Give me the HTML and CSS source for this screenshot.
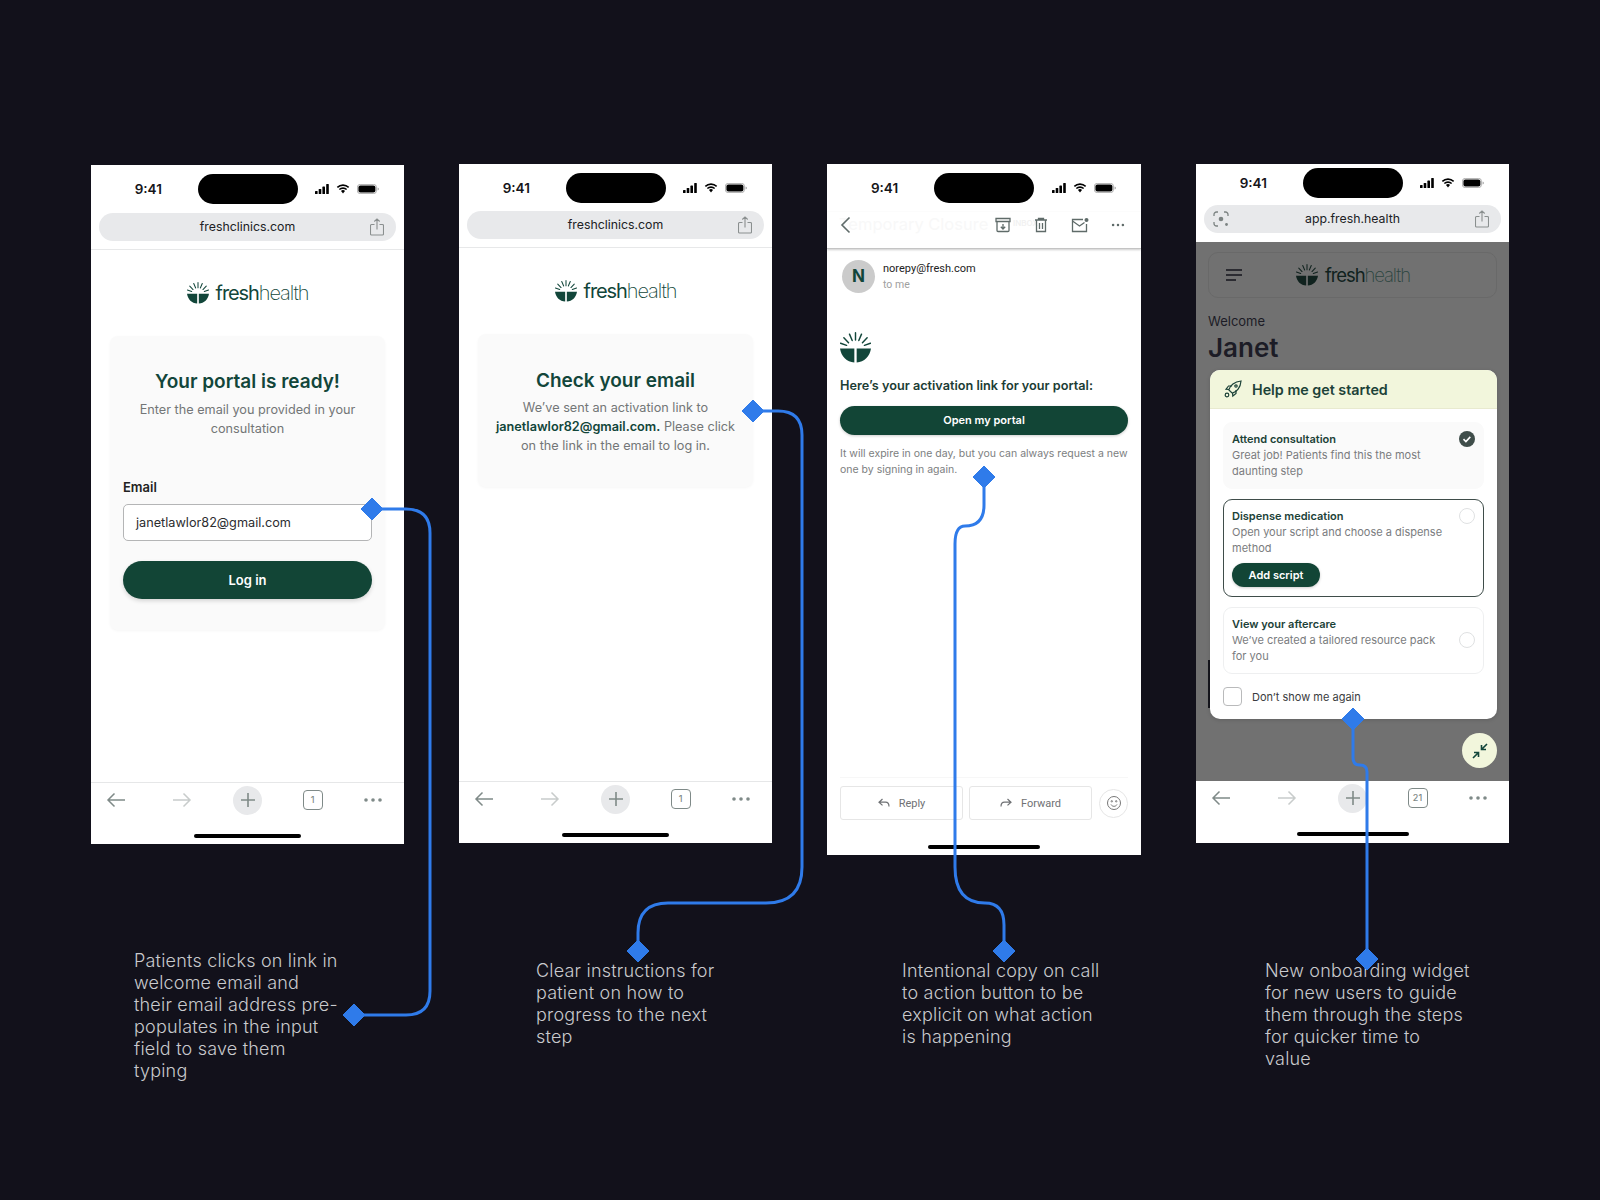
FILE: index.html
```html
<!DOCTYPE html>
<html lang="en">
  <head>
    <meta charset="UTF-8" />
    <title>Fresh Health patient portal flow</title>
    <link rel="stylesheet" href="styles.css">
  </head>
  <body>
    <svg class="defs" width="0" height="0">
      <symbol id="i-mark" viewBox="0 0 32 32">
        <g stroke="currentColor" stroke-width="1.5" stroke-linecap="round" fill="none">
          <path d="M16 .8v7.4M9.800 2.200l2.800 6.600M22.200 2.200l-2.800 6.600M4 6l4.800 5M28 6l-4.800 5M.6 11.600l6.200 2.200M31.400 11.600l-6.200 2.200" />
        </g>
        <path fill="currentColor" d="M0 17h14.800v14.400C7 31 1.200 25 0 17zM32 17H17.200v14.400C25 31 30.800 25 32 17z" />
      </symbol>
      <symbol id="i-signal" viewBox="0 0 14 10">
        <rect x="0" y="7" width="2.600" height="3" rx=".6" /><rect x="3.700" y="5" width="2.600" height="5" rx=".6" />
        <rect x="7.400" y="2.600" width="2.600" height="7.400" rx=".6" /><rect x="11.200" y="0" width="2.600" height="10" rx=".6" />
      </symbol>
      <symbol id="i-wifi" viewBox="0 0 14 10">
        <path d="M7 2c2 0 3.800.8 5.100 2l1.100-1.200A9 9 0 0 0 7 .3 9 9 0 0 0 .8 2.800L1.900 4A7.400 7.400 0 0 1 7 2z" />
        <path d="M7 4.900c1.200 0 2.300.4 3.100 1.200l1.100-1.200A6.200 6.200 0 0 0 7 3.200a6.200 6.200 0 0 0-4.200 1.700l1.100 1.200A4.500 4.500 0 0 1 7 4.900z" />
        <path d="M7 6.100c-.8 0-1.500.3-2 .8L7 9.500l2-2.600c-.5-.5-1.200-.8-2-.8z" />
      </symbol>
      <symbol id="i-battery" viewBox="0 0 22 10">
        <rect x=".4" y=".4" width="19" height="9.200" rx="2.800" fill="none" stroke="#999" stroke-width=".8" />
        <rect x="1.400" y="1.400" width="17" height="7.200" rx="2" />
        <path d="M20.600 3.500v3c.7-.2 1.200-.8 1.200-1.500s-.5-1.300-1.200-1.500z" fill="#999" />
      </symbol>
      <symbol id="i-share" viewBox="0 0 14 18">
        <path d="M4.500 6.500H1.500a1 1 0 0 0-1 1v8.500a1 1 0 0 0 1 1h11a1 1 0 0 0 1-1V7.500a1 1 0 0 0-1-1h-3M7 11.500V1M4.300 3.500 7 .9l2.700 2.600" fill="none" stroke="currentColor" stroke-width="1.100" />
      </symbol>
      <symbol id="i-back" viewBox="0 0 20 16">
        <path d="M19 8H2M8.500 1.500 2 8l6.500 6.500" fill="none" stroke="currentColor" stroke-width="1.500" />
      </symbol>
      <symbol id="i-forward" viewBox="0 0 20 16">
        <path d="M1 8h17M11.500 1.500 18 8l-6.500 6.500" fill="none" stroke="currentColor" stroke-width="1.500" />
      </symbol>
      <symbol id="i-plus" viewBox="0 0 16 16">
        <path d="M8 1v14M1 8h14" fill="none" stroke="currentColor" stroke-width="1.600" />
      </symbol>
      <symbol id="i-dots" viewBox="0 0 20 4">
        <circle cx="3" cy="2" r="1.800" /><circle cx="10" cy="2" r="1.800" /><circle cx="17" cy="2" r="1.800" />
      </symbol>
    </svg>

    <main class="canvas">
      <!-- screen 1: log in -->
      <section class="phone phone-login">
        <div class="status">
          <span class="time">9:41</span>
          <span class="island"></span>
          <span class="status-icons">
            <svg class="ic-signal"><use href="#i-signal" /></svg>
            <svg class="ic-wifi"><use href="#i-wifi" /></svg>
            <svg class="ic-battery"><use href="#i-battery" /></svg>
          </span>
        </div>
        <div class="urlbar">
          <span></span>
          <span class="url">freshclinics.com</span>
          <svg class="ic-share"><use href="#i-share" /></svg>
        </div>
        <div class="page">
          <div class="logo">
            <svg class="logo-mark"><use href="#i-mark" /></svg>
            <span class="logo-text">fresh<span>health</span></span>
          </div>
          <div class="card card-login">
            <h2>Your portal is ready!</h2>
            <p>Enter the email you provided in your consultation</p>
            <div class="field-label">Email</div>
            <div class="field">janetlawlor82@gmail.com</div>
            <div class="btn-main">Log in</div>
          </div>
        </div>
        <div class="toolbar">
          <div class="tools">
            <svg class="ic-arrow"><use href="#i-back" /></svg>
            <svg class="ic-arrow ic-faded"><use href="#i-forward" /></svg>
            <span class="plus"><svg class="ic-plus"><use href="#i-plus" /></svg></span>
            <span class="tabs">1</span>
            <svg class="ic-dots"><use href="#i-dots" /></svg>
          </div>
          <span class="home-bar"></span>
        </div>
      </section>

      <!-- screen 2: check email -->
      <section class="phone phone-check">
        <div class="status">
          <span class="time">9:41</span>
          <span class="island"></span>
          <span class="status-icons">
            <svg class="ic-signal"><use href="#i-signal" /></svg>
            <svg class="ic-wifi"><use href="#i-wifi" /></svg>
            <svg class="ic-battery"><use href="#i-battery" /></svg>
          </span>
        </div>
        <div class="urlbar">
          <span></span>
          <span class="url">freshclinics.com</span>
          <svg class="ic-share"><use href="#i-share" /></svg>
        </div>
        <div class="page">
          <div class="logo">
            <svg class="logo-mark"><use href="#i-mark" /></svg>
            <span class="logo-text">fresh<span>health</span></span>
          </div>
          <div class="card card-check">
            <h2>Check your email</h2>
            <p>We’ve sent an activation link to <b>janetlawlor82@gmail.com.</b> Please click on the link in the email to log in.</p>
          </div>
        </div>
        <div class="toolbar">
          <div class="tools">
            <svg class="ic-arrow"><use href="#i-back" /></svg>
            <svg class="ic-arrow ic-faded"><use href="#i-forward" /></svg>
            <span class="plus"><svg class="ic-plus"><use href="#i-plus" /></svg></span>
            <span class="tabs">1</span>
            <svg class="ic-dots"><use href="#i-dots" /></svg>
          </div>
          <span class="home-bar"></span>
        </div>
      </section>

      <!-- screen 3: activation email -->
      <section class="phone phone-mail">
        <div class="status">
          <span class="time">9:41</span>
          <span class="island"></span>
          <span class="status-icons">
            <svg class="ic-signal"><use href="#i-signal" /></svg>
            <svg class="ic-wifi"><use href="#i-wifi" /></svg>
            <svg class="ic-battery"><use href="#i-battery" /></svg>
          </span>
        </div>
        <div class="mail-head">
          <span class="ghost">Temporary Closure</span>
          <span class="ghost-tag">INBOX</span>
          <svg class="ic-chevron" viewBox="0 0 11 18"><path d="M9.500 1.500 2 9l7.500 7.500" /></svg>
          <span class="mail-actions">
            <svg class="ic-mail" viewBox="0 0 16 16"><path d="M1 1.500h14v3H1zM2 4.500v9a1 1 0 0 0 1 1h10a1 1 0 0 0 1-1v-9" /><path d="M8 7v5M5.800 9.800 8 12l2.200-2.200" /></svg>
            <svg class="ic-mail" viewBox="0 0 16 16"><path d="M2 3h12M3.500 3v11.500h9V3M5.500 3V1.500h5V3M6.500 6v6M9.500 6v6" /></svg>
            <svg class="ic-mail ic-mail-wide" viewBox="0 0 18 16"><path d="M12 2.500H1.500v12h14V7" /><path d="m1.500 4 7 5 5-3.500" /><circle cx="15.500" cy="3" r="2" fill="#5f6b69" stroke="none" /></svg>
            <svg class="ic-dots-mail"><use href="#i-dots" /></svg>
          </span>
        </div>
        <div class="mail-body">
          <div class="sender">
            <span class="avatar">N</span>
            <div>
              <div class="sender-name">norepy@fresh.com</div>
              <div class="sender-to">to me</div>
            </div>
          </div>
          <svg class="mail-mark"><use href="#i-mark" /></svg>
          <h3>Here’s your activation link for your portal:</h3>
          <div class="btn-mail">Open my portal</div>
          <p class="mail-note">It will expire in one day, but you can always request a new one by signing in again.</p>
          <div class="mail-actions-row">
            <div class="mail-btn">
              <svg viewBox="0 0 12 10"><path d="M4.500 1 1 4.200l3.500 3.200M1 4.200h6.500c2 0 3.500 1.300 3.500 4.300" /></svg>
              Reply
            </div>
            <div class="mail-btn">
              <svg viewBox="0 0 12 10"><path d="M7.500 1 11 4.200 7.500 7.400M11 4.200H4.500C2.500 4.200 1 5.500 1 8.500" /></svg>
              Forward
            </div>
            <div class="smile">
              <svg viewBox="0 0 16 16"><circle cx="8" cy="8" r="6.500" /><path d="M5 9.500c.7 1.200 1.700 1.800 3 1.800s2.300-.6 3-1.800" /><circle cx="5.800" cy="6.300" r=".7" /><circle cx="10.200" cy="6.300" r=".7" /></svg>
            </div>
          </div>
        </div>
        <div class="mail-foot"><span class="home-bar"></span></div>
      </section>

      <!-- screen 4: onboarding widget -->
      <section class="phone phone-app">
        <div class="status">
          <span class="time">9:41</span>
          <span class="island"></span>
          <span class="status-icons">
            <svg class="ic-signal"><use href="#i-signal" /></svg>
            <svg class="ic-wifi"><use href="#i-wifi" /></svg>
            <svg class="ic-battery"><use href="#i-battery" /></svg>
          </span>
        </div>
        <div class="urlbar">
          <svg class="ic-lens" viewBox="0 0 16 16">
            <path d="M1 5V3.500A2.500 2.500 0 0 1 3.500 1H5M11 1h1.500A2.500 2.500 0 0 1 15 3.500V5M1 11v1.500A2.500 2.500 0 0 0 3.500 15H5" fill="none" stroke="currentColor" stroke-width="1.300" />
            <circle cx="8" cy="8" r="2.300" fill="currentColor" />
            <circle cx="13.500" cy="13.500" r="1.400" fill="currentColor" />
          </svg>
          <span class="url">app.fresh.health</span>
          <svg class="ic-share"><use href="#i-share" /></svg>
        </div>
        <div class="app-page">
          <div class="app-head">
            <svg class="ic-menu" viewBox="0 0 16 12"><path d="M0 1h16M0 6h16M0 11h10" /></svg>
            <div class="logo logo-dim">
              <svg class="logo-mark"><use href="#i-mark" /></svg>
              <span class="logo-text">fresh<span>health</span></span>
            </div>
          </div>
          <div class="welcome">Welcome</div>
          <div class="name">Janet</div>
          <span class="behind"></span>

          <div class="widget">
            <div class="widget-head">
              <svg class="ic-rocket" viewBox="0 0 18 18">
                <path d="M6.500 11.500 4.800 9.800C6 5.500 10.500 1.500 17 1c-.4 6.500-4.400 11-8.700 12.200z" />
                <path d="M5 9.500 2 9.200 4.500 6H8M8.500 13l.3 3 3.200-2.500V10" />
                <circle cx="3" cy="15" r="1.800" />
                <circle cx="12" cy="6" r="1.200" />
              </svg>
              Help me get started
            </div>
            <div class="widget-body">
              <div class="step step-done">
                <div class="step-text">
                  <h4>Attend consultation</h4>
                  <p>Great job! Patients find this the most daunting step</p>
                </div>
                <svg class="ic-check" viewBox="0 0 16 16"><circle cx="8" cy="8" r="8" /><path d="m4.500 8.200 2.400 2.300 4.400-4.600" /></svg>
              </div>
              <div class="step step-active">
                <div class="step-text">
                  <h4>Dispense medication</h4>
                  <p>Open your script and choose a dispense method</p>
                  <div class="btn-small">Add script</div>
                </div>
                <span class="radio"></span>
              </div>
              <div class="step step-todo">
                <div class="step-text">
                  <h4>View your aftercare</h4>
                  <p>We’ve created a tailored resource pack for you</p>
                </div>
                <span class="radio"></span>
              </div>
              <div class="dont-show">
                <span class="checkbox"></span>
                Don’t show me again
              </div>
            </div>
          </div>

          <div class="fab">
            <svg viewBox="0 0 16 16"><path d="M15 1 9.500 6.500M9.500 2v4.500H14M1 15l5.500-5.500M6.500 14V9.500H2" /></svg>
          </div>
        </div>
        <div class="toolbar toolbar-app">
          <div class="tools">
            <svg class="ic-arrow"><use href="#i-back" /></svg>
            <svg class="ic-arrow ic-faded"><use href="#i-forward" /></svg>
            <span class="plus"><svg class="ic-plus"><use href="#i-plus" /></svg></span>
            <span class="tabs">21</span>
            <svg class="ic-dots"><use href="#i-dots" /></svg>
          </div>
          <span class="home-bar"></span>
        </div>
      </section>

      <p class="note note-1">Patients clicks on link in<br />welcome email and<br />their email address pre-<br />populates in the input<br />field to save them<br />typing</p>
      <p class="note note-2">Clear instructions for<br />patient on how to<br />progress to the next<br />step</p>
      <p class="note note-3">Intentional copy on call<br />to action button to be<br />explicit on what action<br />is happening</p>
      <p class="note note-4">New onboarding widget<br />for new users to guide<br />them through the steps<br />for quicker time to<br />value</p>

      <svg class="links" viewBox="0 0 1600 1200">
        <g class="link-lines">
          <path d="M372 509H406Q430 509 430 533V991Q430 1015 406 1015H354" />
          <path d="M753 411H778Q802 411 802 435V867Q802 903 766 903H668Q638 903 638 933V951" />
          <path d="M984 477V505Q984 526 965 526Q955 526 955 544V867Q955 903 985 903Q1004 903 1004 925V951" />
          <path d="M1353 719V758Q1353 765 1360 765Q1367 765 1367 772V959" />
        </g>
        <g class="link-ends">
          <path d="M372 498 383 509 372 520 361 509Z" />
          <path d="M354 1004 365 1015 354 1026 343 1015Z" />
          <path d="M753 400 764 411 753 422 742 411Z" />
          <path d="M638 940 649 951 638 962 627 951Z" />
          <path d="M984 466 995 477 984 488 973 477Z" />
          <path d="M1004 940 1015 951 1004 962 993 951Z" />
          <path d="M1353 708 1364 719 1353 730 1342 719Z" />
          <path d="M1367 948 1378 959 1367 970 1356 959Z" />
        </g>
      </svg>
    </main>
  </body>
</html>
```

FILE: styles.css
```css
* {
  padding: 0;
  margin: 0;
  box-sizing: border-box;
}

body {
  background-color: #12111b;
  font-family: "Inter", "Liberation Sans", sans-serif;
  color: #1c1c22;
}

.defs {
  position: absolute;
}

.canvas {
  position: relative;
  width: 1600px;
  height: 1200px;
  overflow: hidden;
}

/* phones sit on a free canvas */
.phone {
  position: absolute;
  display: flex;
  flex-direction: column;
  background-color: #fff;
}

.phone-login {
  left: 91px;
  top: 165px;
  width: 313px;
  height: 679px;
}

.phone-check {
  left: 459px;
  top: 164px;
  width: 313px;
  height: 679px;
}

.phone-mail {
  left: 827px;
  top: 164px;
  width: 314px;
  height: 691px;
}

.phone-app {
  left: 1196px;
  top: 164px;
  width: 313px;
  height: 679px;
}

/* status bar */
.status {
  display: grid;
  grid-template-columns: 1fr 100px 1fr;
  align-items: center;
  height: 48px;
  padding: 9px 0;
}

.phone-check .status {
  height: 47px;
  padding-bottom: 8px;
}

.phone-app .status {
  height: 41px;
  padding: 4px 0 7px;
}

.time {
  justify-self: center;
  padding-left: 8px;
  font-size: 13.5px;
  font-weight: 600;
  color: #16161a;
}

.island {
  height: 30px;
  border-radius: 15px;
  background-color: #000;
}

.status-icons {
  display: flex;
  justify-self: center;
  align-items: center;
  gap: 7px;
  padding-right: 8px;
}

.ic-signal,
.ic-wifi {
  width: 14px;
  height: 10px;
}

.ic-battery {
  width: 22px;
  height: 10px;
}

/* address bar */
.urlbar {
  display: grid;
  grid-template-columns: 1fr auto 1fr;
  align-items: center;
  height: 28px;
  margin: 0 8px;
  padding: 0 12px;
  border-radius: 14px;
  background-color: #e8e9eb;
}

.url {
  padding-bottom: 1px;
  font-size: 12.3px;
  color: #202124;
}

.ic-share {
  justify-self: end;
  width: 14px;
  height: 18px;
  color: #8a8f8f;
}

.ic-lens {
  width: 16px;
  height: 16px;
  margin-left: -3px;
  color: #7c8382;
}

/* page */
.page {
  flex: 1;
  display: flex;
  flex-direction: column;
  align-items: center;
  margin-top: 8px;
  padding-top: 32px;
  border-top: 1px solid #e7e8e9;
}

.logo {
  display: flex;
  align-items: center;
  gap: 7px;
  height: 22px;
  color: #12463a;
}

.logo-mark {
  width: 22px;
  height: 22px;
}

.logo-text {
  font-size: 20px;
  letter-spacing: -1.1px;
}

.logo-text span {
  font-weight: 200;
}

.card {
  width: 275px;
  margin-top: 32px;
  padding: 33px 13px 0;
  border-radius: 8px;
  background-color: #fafafa;
  box-shadow: 0 1px 3px rgba(0, 0, 0, 0.04);
  text-align: center;
}

.card-login {
  height: 294px;
}

.card-check {
  height: 153px;
  padding-top: 34px;
}

.card h2 {
  font-size: 19px;
  line-height: 26px;
  font-weight: 600;
  color: #12463a;
}

.card p {
  margin-top: 5px;
  font-size: 12.7px;
  line-height: 19px;
  color: #737677;
}

.card-check p {
  margin-top: 4px;
}

.card p b {
  font-weight: 600;
  color: #12463a;
}

.field-label {
  margin-top: 40px;
  font-size: 13px;
  line-height: 18px;
  font-weight: 600;
  text-align: left;
  color: #222;
}

.field {
  height: 37px;
  margin-top: 8px;
  padding-left: 12px;
  border: 1px solid #b4b5b6;
  border-radius: 5px;
  background-color: #fff;
  font-size: 12.7px;
  line-height: 35px;
  text-align: left;
  color: #2c2d30;
}

.btn-main {
  height: 38px;
  margin-top: 20px;
  border-radius: 19px;
  background-color: #124536;
  box-shadow: 0 2px 4px rgba(0, 0, 0, 0.15);
  font-size: 13px;
  line-height: 38px;
  font-weight: 600;
  color: #fff;
}

/* bottom toolbar */
.toolbar {
  display: flex;
  flex-direction: column;
  align-items: center;
  height: 62px;
  border-top: 1px solid #e6e7e8;
}

.toolbar-app {
  border-top: none;
}

.tools {
  display: grid;
  grid-template-columns: repeat(5, 66px);
  justify-content: center;
  justify-items: center;
  align-items: center;
  width: 100%;
  height: 34px;
  color: #7f8a88;
}

.ic-arrow {
  width: 20px;
  height: 16px;
}

.ic-faded {
  color: #c8cccb;
}

.plus {
  display: flex;
  justify-content: center;
  align-items: center;
  width: 29px;
  height: 29px;
  border-radius: 50%;
  background-color: #e8e9eb;
}

.ic-plus {
  width: 16px;
  height: 16px;
}

.tabs {
  width: 20px;
  height: 20px;
  margin-right: 2px;
  border: 1.5px solid #7f8a88;
  border-radius: 4px;
  font-size: 9px;
  line-height: 17px;
  font-weight: 500;
  text-align: center;
}

.ic-dots {
  width: 20px;
  height: 4px;
  margin-right: 14px;
  fill: #7f8a88;
}

.home-bar {
  width: 107px;
  height: 4px;
  margin-top: auto;
  margin-bottom: 6px;
  border-radius: 2px;
  background-color: #000;
}

.toolbar-app .home-bar {
  width: 112px;
  margin-bottom: 7px;
}

/* email screen */
.mail-head {
  position: relative;
  display: flex;
  justify-content: space-between;
  align-items: center;
  height: 37px;
  padding: 0 16px 11px 13px;
  border-bottom: 1px solid #c4c4c4;
  box-shadow: 0 1px 2px rgba(0, 0, 0, 0.2);
}

.ghost {
  position: absolute;
  left: 12px;
  top: 2px;
  font-size: 16.5px;
  color: #f8f8f8;
  white-space: nowrap;
}

.ghost-tag {
  position: absolute;
  left: 186px;
  top: 6px;
  font-size: 8px;
  font-weight: 600;
  color: #f1f1f1;
}

.ic-chevron {
  position: relative;
  width: 11px;
  height: 18px;
}

.ic-chevron path {
  fill: none;
  stroke: #5f6b69;
  stroke-width: 1.6;
}

.mail-actions {
  position: relative;
  display: flex;
  align-items: center;
  gap: 22px;
}

.ic-mail {
  width: 16px;
  height: 16px;
  fill: none;
  stroke: #5f6b69;
  stroke-width: 1.3;
}

.ic-mail-wide {
  width: 18px;
}

.ic-dots-mail {
  width: 14px;
  height: 4px;
  fill: #5f6b69;
}

.mail-body {
  flex: 1;
  display: flex;
  flex-direction: column;
  padding: 11px 13px 0;
}

.sender {
  display: flex;
  align-items: center;
  gap: 8px;
  padding-left: 2px;
}

.avatar {
  width: 33px;
  height: 33px;
  border-radius: 50%;
  background-color: #cbcbcb;
  font-size: 17px;
  line-height: 33px;
  font-weight: 700;
  text-align: center;
  color: #12463a;
}

.sender-name {
  font-family: "Roboto", sans-serif;
  font-size: 11px;
  line-height: 15px;
  color: #222;
}

.sender-to {
  margin-top: 1px;
  font-family: "Roboto", sans-serif;
  font-size: 10.5px;
  line-height: 15px;
  color: #a0a0a0;
}

.mail-mark {
  width: 31px;
  height: 31px;
  margin-top: 39px;
  color: #12463a;
}

.mail-body h3 {
  margin-top: 15px;
  font-size: 12.7px;
  line-height: 16px;
  font-weight: 600;
  color: #1c3d35;
}

.btn-mail {
  height: 29px;
  margin-top: 12px;
  border-radius: 15px;
  background-color: #124536;
  box-shadow: 0 1px 3px rgba(0, 0, 0, 0.2);
  font-size: 11px;
  line-height: 29px;
  font-weight: 600;
  text-align: center;
  color: #fff;
}

.mail-note {
  margin-top: 11px;
  font-size: 10.5px;
  line-height: 16px;
  color: #7c7e80;
}

.mail-actions-row {
  display: flex;
  align-items: center;
  gap: 6px;
  margin-top: auto;
  padding-top: 8px;
  border-top: 1px solid #f7f7f7;
}

.mail-btn {
  display: flex;
  justify-content: center;
  align-items: center;
  gap: 9px;
  width: 123px;
  height: 34px;
  border: 1px solid #e6e6e6;
  border-radius: 3px;
  font-family: "Roboto", sans-serif;
  font-size: 11px;
  color: #6f7174;
}

.mail-btn svg {
  width: 12px;
  height: 10px;
  fill: none;
  stroke: #6f7174;
  stroke-width: 1.2;
}

.smile {
  display: flex;
  justify-content: center;
  align-items: center;
  width: 29px;
  height: 29px;
  margin-left: 1px;
  border: 1px solid #e6e6e6;
  border-radius: 50%;
}

.smile svg {
  width: 16px;
  height: 16px;
  fill: none;
  stroke: #777;
  stroke-width: 1;
}

.mail-foot {
  display: flex;
  flex-direction: column;
  align-items: center;
  height: 35px;
}

.mail-foot .home-bar {
  width: 112px;
}

/* onboarding screen */
.app-page {
  position: relative;
  flex: 1;
  margin-top: 9px;
  padding: 10px 12px 0;
  background-color: #717171;
}

.app-head {
  display: flex;
  align-items: center;
  height: 46px;
  padding-left: 17px;
  border: 1px solid #696969;
  border-radius: 10px;
}

.ic-menu {
  width: 16px;
  height: 12px;
  fill: none;
  stroke: #15151c;
  stroke-width: 1.5;
}

.logo-dim {
  margin-left: 54px;
  color: #10221e;
}

.logo-dim .logo-text {
  font-size: 18.5px;
}

.logo-dim .logo-text span {
  color: #2a443e;
}

.welcome {
  margin-top: 14px;
  font-size: 13px;
  line-height: 18px;
  color: #1c1c26;
}

.name {
  margin-top: 2px;
  font-size: 26px;
  line-height: 32px;
  font-weight: 600;
  color: #1c1c26;
}

.behind {
  position: absolute;
  left: 12px;
  top: 418px;
  width: 2px;
  height: 48px;
  background-color: #15151c;
}

.widget {
  position: absolute;
  left: 14px;
  top: 128px;
  width: 287px;
  height: 349px;
  overflow: hidden;
  border-radius: 10px;
  background-color: #fff;
  box-shadow: 0 1px 4px rgba(0, 0, 0, 0.15);
}

.widget-head {
  display: flex;
  align-items: center;
  gap: 10px;
  height: 39px;
  padding-left: 14px;
  border-bottom: 1px solid #e8eacf;
  background-color: #f2f6dc;
  font-size: 14.3px;
  font-weight: 600;
  color: #1c4238;
}

.ic-rocket {
  width: 18px;
  height: 18px;
  fill: none;
  stroke: #1c4238;
  stroke-width: 1.2;
}

.widget-body {
  display: flex;
  flex-direction: column;
  gap: 10px;
  padding: 13px 13px 0;
}

.step {
  display: flex;
  justify-content: space-between;
  align-items: flex-start;
  padding: 8px 7px 9px 8px;
  border: 1px solid #eeeff0;
  border-radius: 9px;
}

.step-done {
  border-color: #fafafa;
  background-color: #fafafa;
}

.step-active {
  border-color: #3f4d4a;
}

.step-todo {
  align-items: center;
}

.step-text {
  width: 218px;
}

.step h4 {
  font-size: 11px;
  line-height: 16px;
  font-weight: 600;
  color: #1c4238;
}

.step p {
  font-size: 11px;
  line-height: 16px;
  color: #7a7c7e;
}

.ic-check {
  width: 16px;
  height: 16px;
  margin-right: 1px;
  fill: #3f4d4a;
}

.ic-check path {
  fill: none;
  stroke: #fff;
  stroke-width: 1.6;
}

.radio {
  width: 16px;
  height: 16px;
  margin-right: 1px;
  border: 1px solid #dfe1e2;
  border-radius: 50%;
}

.btn-small {
  width: 88px;
  height: 24px;
  margin-top: 7px;
  border-radius: 12px;
  background-color: #124536;
  box-shadow: 0 1px 3px rgba(0, 0, 0, 0.2);
  font-size: 11px;
  line-height: 24px;
  font-weight: 600;
  text-align: center;
  color: #fff;
}

.dont-show {
  display: flex;
  align-items: center;
  gap: 10px;
  margin-top: 3px;
  font-size: 11px;
  color: #3a3c40;
}

.checkbox {
  width: 19px;
  height: 19px;
  border: 1px solid #b9babb;
  border-radius: 4px;
}

.fab {
  position: absolute;
  left: 266px;
  top: 491px;
  display: flex;
  justify-content: center;
  align-items: center;
  width: 35px;
  height: 35px;
  border-radius: 50%;
  background-color: #f2f6dc;
}

.fab svg {
  width: 16px;
  height: 16px;
  fill: none;
  stroke: #12463a;
  stroke-width: 1.6;
}

/* annotations */
.note {
  position: absolute;
  width: 225px;
  font-size: 18px;
  line-height: 22px;
  font-weight: 300;
  letter-spacing: 0.2px;
  color: #c9cacd;
}

.note-1 {
  left: 134px;
  top: 950px;
}

.note-2 {
  left: 536px;
  top: 960px;
}

.note-3 {
  left: 902px;
  top: 960px;
}

.note-4 {
  left: 1265px;
  top: 960px;
}

.links {
  position: absolute;
  left: 0;
  top: 0;
  width: 1600px;
  height: 1200px;
  pointer-events: none;
}

.link-lines path {
  fill: none;
  stroke: #2f7bea;
  stroke-width: 3;
}

.link-ends path {
  fill: #2f7bea;
  stroke: #2f7bea;
  stroke-width: 1;
  stroke-linejoin: round;
}
```
